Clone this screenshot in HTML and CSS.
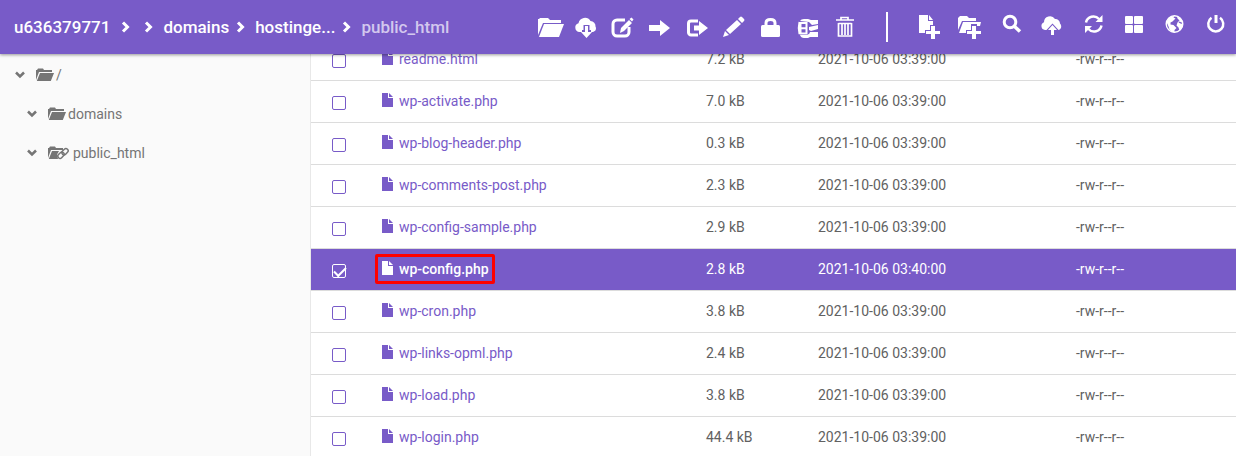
FILE: index.html
```html
<!DOCTYPE html>
<html lang="en">
<head>
<meta charset="utf-8">
<title>File manager</title>
<meta name="viewport" content="width=device-width, initial-scale=1">
<link rel="stylesheet" href="styles.css">
</head>
<body class="app">
<svg class="defs" aria-hidden="true">
  <symbol id="chev" viewBox="0 0 10 12"><path d="M2 1.500 6.500 6 2 10.500" fill="none" stroke="currentColor" stroke-width="3"/></symbol>
  <symbol id="down" viewBox="0 0 10 8"><path d="M1 1.500 5 5.500 9 1.500" fill="none" stroke="currentColor" stroke-width="2.500"/></symbol>
  <symbol id="folder" viewBox="0 0 18 14"><path d="M0 12V2h1L2 .5h5L8 2h8v2H3z"/><path d="M4 5H18l-3.200 8H.8z"/></symbol>
  <symbol id="folder-link" viewBox="0 0 22 14"><path d="M0 12V2h1L2 .5h5L8 2h7v2H3z"/><path d="M4 5H11l-2 3.500 1 4.500H.8z"/><g fill="none" stroke="currentColor" stroke-width="1.500"><rect x="9.500" y="7" width="7" height="4.400" rx="2.200" transform="rotate(-45 13 9.200)"/><rect x="13.500" y="3.500" width="7" height="4.400" rx="2.200" transform="rotate(-45 17 5.700)"/></g></symbol>
  <symbol id="file" viewBox="0 0 11 14"><path d="M0 0h6v5h5v9H0z"/><path d="M7 0v4h4z"/></symbol>
</svg>
<header class="topbar">
  <nav class="crumbs" aria-label="Path">
    <a href="#">u636379771</a><svg class="chev chev-first"><use href="#chev"/></svg><svg class="chev chev-next"><use href="#chev"/></svg>
    <a href="#">domains</a><svg class="chev"><use href="#chev"/></svg>
    <a href="#">hostinge...</a><svg class="chev"><use href="#chev"/></svg>
    <span class="current">public_html</span>
  </nav>
  <div class="tools">
    <button class="tool" aria-label="Open"><svg viewBox="0 0 37 36"><path d="M7 26V10h1l1-1h8l2 2h11v3H12z"/><path d="M13 15h20l-5 13H8z"/></svg></button>
    <button class="tool" aria-label="Download"><svg viewBox="0 0 37 36"><path d="M14 23h-2.500a4.500 4.500 0 0 1-1-8.800A6.500 6.500 0 0 1 22.500 12a5 5 0 0 1 5 5.500c1.500 3-.5 5.500-3.500 5.500h-1v-2h-1.500v-5h-6v5H14z"/><path d="M17 17h3v6h4l-5.500 6-5.500-6h4z"/></svg></button>
    <button class="tool" aria-label="Edit"><svg viewBox="0 0 37 36"><path d="M20 11h-8a4 4 0 0 0-4 4v8a4 4 0 0 0 4 4h8a4 4 0 0 0 4-4v-5" fill="none" stroke="currentColor" stroke-width="3"/><path d="m15 24 1-5 8-8 3 3-8 8zM24.500 10l2-1.500 2 2-1.500 2z"/></svg></button>
    <button class="tool" aria-label="Move"><svg viewBox="0 0 37 36"><path d="M7 16h11v-5l10 8-10 8v-5H7z"/></svg></button>
    <button class="tool" aria-label="Copy"><svg viewBox="0 0 37 36"><path d="M19 12h-7a2.500 2.500 0 0 0-2.500 2.500v9A2.500 2.500 0 0 0 12 26h7" fill="none" stroke="currentColor" stroke-width="3"/><path d="M15 16.500h5v-4.500l9 7-9 7v-4.500h-5z"/></svg></button>
    <button class="tool" aria-label="Rename"><svg viewBox="0 0 37 36"><path d="m7 28 2-6 4 4zM10 21 21 11l4 4-11 10zM22 10l2-2q1-1 2 0l2 2q1 1 0 2l-2 2z"/></svg></button>
    <button class="tool" aria-label="Permissions"><svg viewBox="0 0 37 36"><path d="M13 18v-4q0-3.500 4.500-3.500T22 14v4" fill="none" stroke="currentColor" stroke-width="3"/><rect x="8" y="16" width="19" height="12" rx="1.500"/></svg></button>
    <button class="tool" aria-label="Archive"><svg viewBox="0 0 37 36"><path d="M10.500 14h6v10.500h-6zM10.500 19.200h6M9.500 13q-1.500 6 0 12" fill="none" stroke="currentColor" stroke-width="2"/><path d="M10 12q1-2 4-2h4l3 1h7v4l-6 1-3-3zM19 18l9-2v4l-7 2-2-1zM10 26h7q3-1 3-3l8 0v5h-8l-2 1h-4q-3 0-4-3z"/></svg></button>
    <button class="tool" aria-label="Delete"><svg viewBox="0 0 37 36"><path d="M9 11h18M14 11V8.500h7V11M11.500 14v13h13V14M11.500 14.500h13M15 15v11M18 15v11M21 15v11" fill="none" stroke="currentColor" stroke-width="1.700"/></svg></button>
    <span class="divider"></span>
    <button class="tool wide" aria-label="New file"><svg viewBox="0 0 41 36"><path d="M11 6h9v6h5v4h-3v5h-5v3h-6z"/><path d="m21 6 4 5h-4zM23 17h4v5h5v3h-5v5h-4v-5h-5v-3h5z"/></svg></button>
    <button class="tool wide" aria-label="New folder"><svg viewBox="0 0 41 36"><path d="M9 21V9l2-2h7l2 2h7v3H13z"/><path d="M14 13h18l-1 4h-3v-2h-6v6h-5v3H10z"/><path d="M23 17h4v5h5v3h-5v5h-4v-5h-5v-3h5z"/></svg></button>
    <button class="tool wide" aria-label="Search"><svg viewBox="0 0 41 36"><circle cx="20" cy="13" r="5.800" fill="none" stroke="currentColor" stroke-width="3"/><path d="m24 17 6 5.500" stroke="currentColor" stroke-width="3.500"/></svg></button>
    <button class="tool wide" aria-label="Upload"><svg viewBox="0 0 41 36"><path d="M14 21a4 4 0 0 1-1-7.700A6 6 0 0 1 24 10a4.500 4.500 0 0 1 5 4.500c2.500 3 .8 6-1.500 6.500L21.500 14.500 15.500 21z"/><path d="M20 26v-5h-3l4.500-5 4.500 5h-3v5z"/></svg></button>
    <button class="tool wide" aria-label="Refresh"><svg viewBox="0 0 41 36"><path d="M14 13.500a7.500 7.500 0 0 1 13-3.500M29.500 16.500a7.500 7.500 0 0 1-13 3.500" fill="none" stroke="currentColor" stroke-width="2.500"/><path d="M30.500 6v7h-7zM13 24v-7h7z"/></svg></button>
    <button class="tool wide" aria-label="View"><svg viewBox="0 0 41 36"><rect x="12" y="7" width="8" height="8" rx="1"/><rect x="21" y="7" width="9" height="8" rx="1"/><rect x="12" y="16" width="8" height="8" rx="1"/><rect x="21" y="16" width="9" height="8" rx="1"/></svg></button>
    <button class="tool wide" aria-label="Language"><svg viewBox="0 0 41 36"><circle cx="20.500" cy="15" r="8.300" fill="none" stroke="currentColor" stroke-width="1.400"/><path d="M12.500 13q2-6 8-6l-1 1.500 2 1-3 3-2 1v2l3 .5 3 3-2 2v2.500q-3 0-5-3l-1-3zM23 7.500q4 1 5.500 5l-1 1-2-1-1 1 2 1 2.500.5q0 4-3.500 6.500l-1-3-2-2 1-3 2-2-2-2z"/></svg></button>
    <button class="tool wide" aria-label="Log out"><svg viewBox="0 0 41 36"><path d="M16.500 8.800a7.500 7.500 0 1 0 8.500 0" fill="none" stroke="currentColor" stroke-width="2.500"/><path d="M19.500 6h3v8h-3z"/></svg></button>
  </div>
</header>
<div class="body">
  <aside class="tree">
    <div class="node root"><svg class="down"><use href="#down"/></svg><svg class="folder"><use href="#folder"/></svg><a href="#">/</a></div>
    <div class="node"><svg class="down"><use href="#down"/></svg><svg class="folder"><use href="#folder"/></svg><a href="#">domains</a></div>
    <div class="node"><svg class="down"><use href="#down"/></svg><svg class="folder linked"><use href="#folder-link"/></svg><a href="#">public_html</a></div>
  </aside>
  <main class="files">
    <table class="list">
      <colgroup><col class="c-check"><col><col class="c-size"><col class="c-date"><col class="c-perm"></colgroup>
      <tbody>
      <tr><td><input type="checkbox" aria-label="readme.html"></td><td><a class="name" href="#"><svg><use href="#file"/></svg>readme.html</a></td><td>7.2 kB</td><td>2021-10-06 03:39:00</td><td>-rw-r--r--</td></tr>
      <tr><td><input type="checkbox" aria-label="wp-activate.php"></td><td><a class="name" href="#"><svg><use href="#file"/></svg>wp-activate.php</a></td><td>7.0 kB</td><td>2021-10-06 03:39:00</td><td>-rw-r--r--</td></tr>
      <tr><td><input type="checkbox" aria-label="wp-blog-header.php"></td><td><a class="name" href="#"><svg><use href="#file"/></svg>wp-blog-header.php</a></td><td>0.3 kB</td><td>2021-10-06 03:39:00</td><td>-rw-r--r--</td></tr>
      <tr><td><input type="checkbox" aria-label="wp-comments-post.php"></td><td><a class="name" href="#"><svg><use href="#file"/></svg>wp-comments-post.php</a></td><td>2.3 kB</td><td>2021-10-06 03:39:00</td><td>-rw-r--r--</td></tr>
      <tr><td><input type="checkbox" aria-label="wp-config-sample.php"></td><td><a class="name" href="#"><svg><use href="#file"/></svg>wp-config-sample.php</a></td><td>2.9 kB</td><td>2021-10-06 03:39:00</td><td>-rw-r--r--</td></tr>
      <tr class="selected"><td><input type="checkbox" aria-label="wp-config.php" checked></td><td><a class="name marked" href="#"><svg><use href="#file"/></svg>wp-config.php</a></td><td>2.8 kB</td><td>2021-10-06 03:40:00</td><td>-rw-r--r--</td></tr>
      <tr><td><input type="checkbox" aria-label="wp-cron.php"></td><td><a class="name" href="#"><svg><use href="#file"/></svg>wp-cron.php</a></td><td>3.8 kB</td><td>2021-10-06 03:39:00</td><td>-rw-r--r--</td></tr>
      <tr><td><input type="checkbox" aria-label="wp-links-opml.php"></td><td><a class="name" href="#"><svg><use href="#file"/></svg>wp-links-opml.php</a></td><td>2.4 kB</td><td>2021-10-06 03:39:00</td><td>-rw-r--r--</td></tr>
      <tr><td><input type="checkbox" aria-label="wp-load.php"></td><td><a class="name" href="#"><svg><use href="#file"/></svg>wp-load.php</a></td><td>3.8 kB</td><td>2021-10-06 03:39:00</td><td>-rw-r--r--</td></tr>
      <tr><td><input type="checkbox" aria-label="wp-login.php"></td><td><a class="name" href="#"><svg><use href="#file"/></svg>wp-login.php</a></td><td>44.4 kB</td><td>2021-10-06 03:39:00</td><td>-rw-r--r--</td></tr>
      </tbody>
    </table>
  </main>
</div>
</body>
</html>
```
FILE: styles.css
```css
* { box-sizing: border-box; }
.app { margin: 0; height: 100vh; display: flex; flex-direction: column; overflow: hidden; font: 14px/20px Roboto, sans-serif; color: #616161; background: #fff; }
a { color: inherit; text-decoration: none; }
svg { fill: currentColor; flex: none; }
.defs { display: none; }

.topbar { flex: none; height: 54px; display: flex; align-items: center; justify-content: space-between; padding-left: 14px; background: #785bc8; color: #fff; box-shadow: 0 1px 3px rgba(0, 0, 0, .4); z-index: 1; }
.crumbs { display: flex; align-items: center; font-size: 17px; font-weight: 500; white-space: nowrap; }
.chev { width: 10px; height: 12px; margin: 0 9px 0 7px; }
.chev-first { margin-left: 11px; }
.chev-next { margin-left: 4px; }
.current { color: #d3c8ee; }
.tools { display: flex; align-items: center; }
.tool { width: 37px; height: 36px; padding: 0; border: 0; background: none; color: inherit; cursor: pointer; }
.tool svg { display: block; width: 100%; height: 36px; }
.wide { width: 41px; }
.divider { width: 2px; height: 30px; margin: 0 20px 0 22px; background: #fff; }

.body { flex: 1; min-height: 0; display: flex; }
.tree { width: 311px; flex: none; padding-top: 1px; background: #fafafa; border-right: 1px solid #e8e8e8; color: #757575; }
.node { height: 39px; display: flex; align-items: center; padding-left: 27px; }
.root { padding-left: 15px; }
.down { width: 10px; height: 8px; margin-right: 11px; }
.folder { width: 18px; height: 14px; margin-right: 2px; }
.linked { width: 22px; margin-right: 3px; }

.files { flex: 1; min-width: 0; overflow: hidden; }
.list { width: 100%; margin-top: -15px; table-layout: fixed; border-collapse: separate; border-spacing: 0; }
.list td { height: 42px; padding: 0 0 2px; border-bottom: 1px solid #dcdcdc; white-space: nowrap; }
.c-check { width: 71px; }
.c-size { width: 112px; }
.c-date { width: 258px; }
.c-perm { width: 160px; }
.list input { appearance: none; display: block; width: 14px; height: 14px; margin: 5px 0 0 21px; border: 1px solid #785bc8; border-radius: 2px; }
.list input:checked { border-color: #fff; }
.list input:checked::before { content: ""; display: block; width: 10px; height: 5px; margin: 2px 1px; border: solid #fff; border-width: 0 0 2px 2px; transform: rotate(-45deg); }
.name { display: inline-flex; align-items: center; gap: 6px; color: #785bc8; vertical-align: middle; }
.name svg { width: 11px; height: 14px; margin-bottom: 2px; }
.selected { background: #785bc8; color: #fff; }
.selected .name { color: #fff; font-weight: 500; }
.marked { margin-left: -7px; padding: 2px 3px 2px 4px; border: 3px solid #f00; border-radius: 2px; }
```
